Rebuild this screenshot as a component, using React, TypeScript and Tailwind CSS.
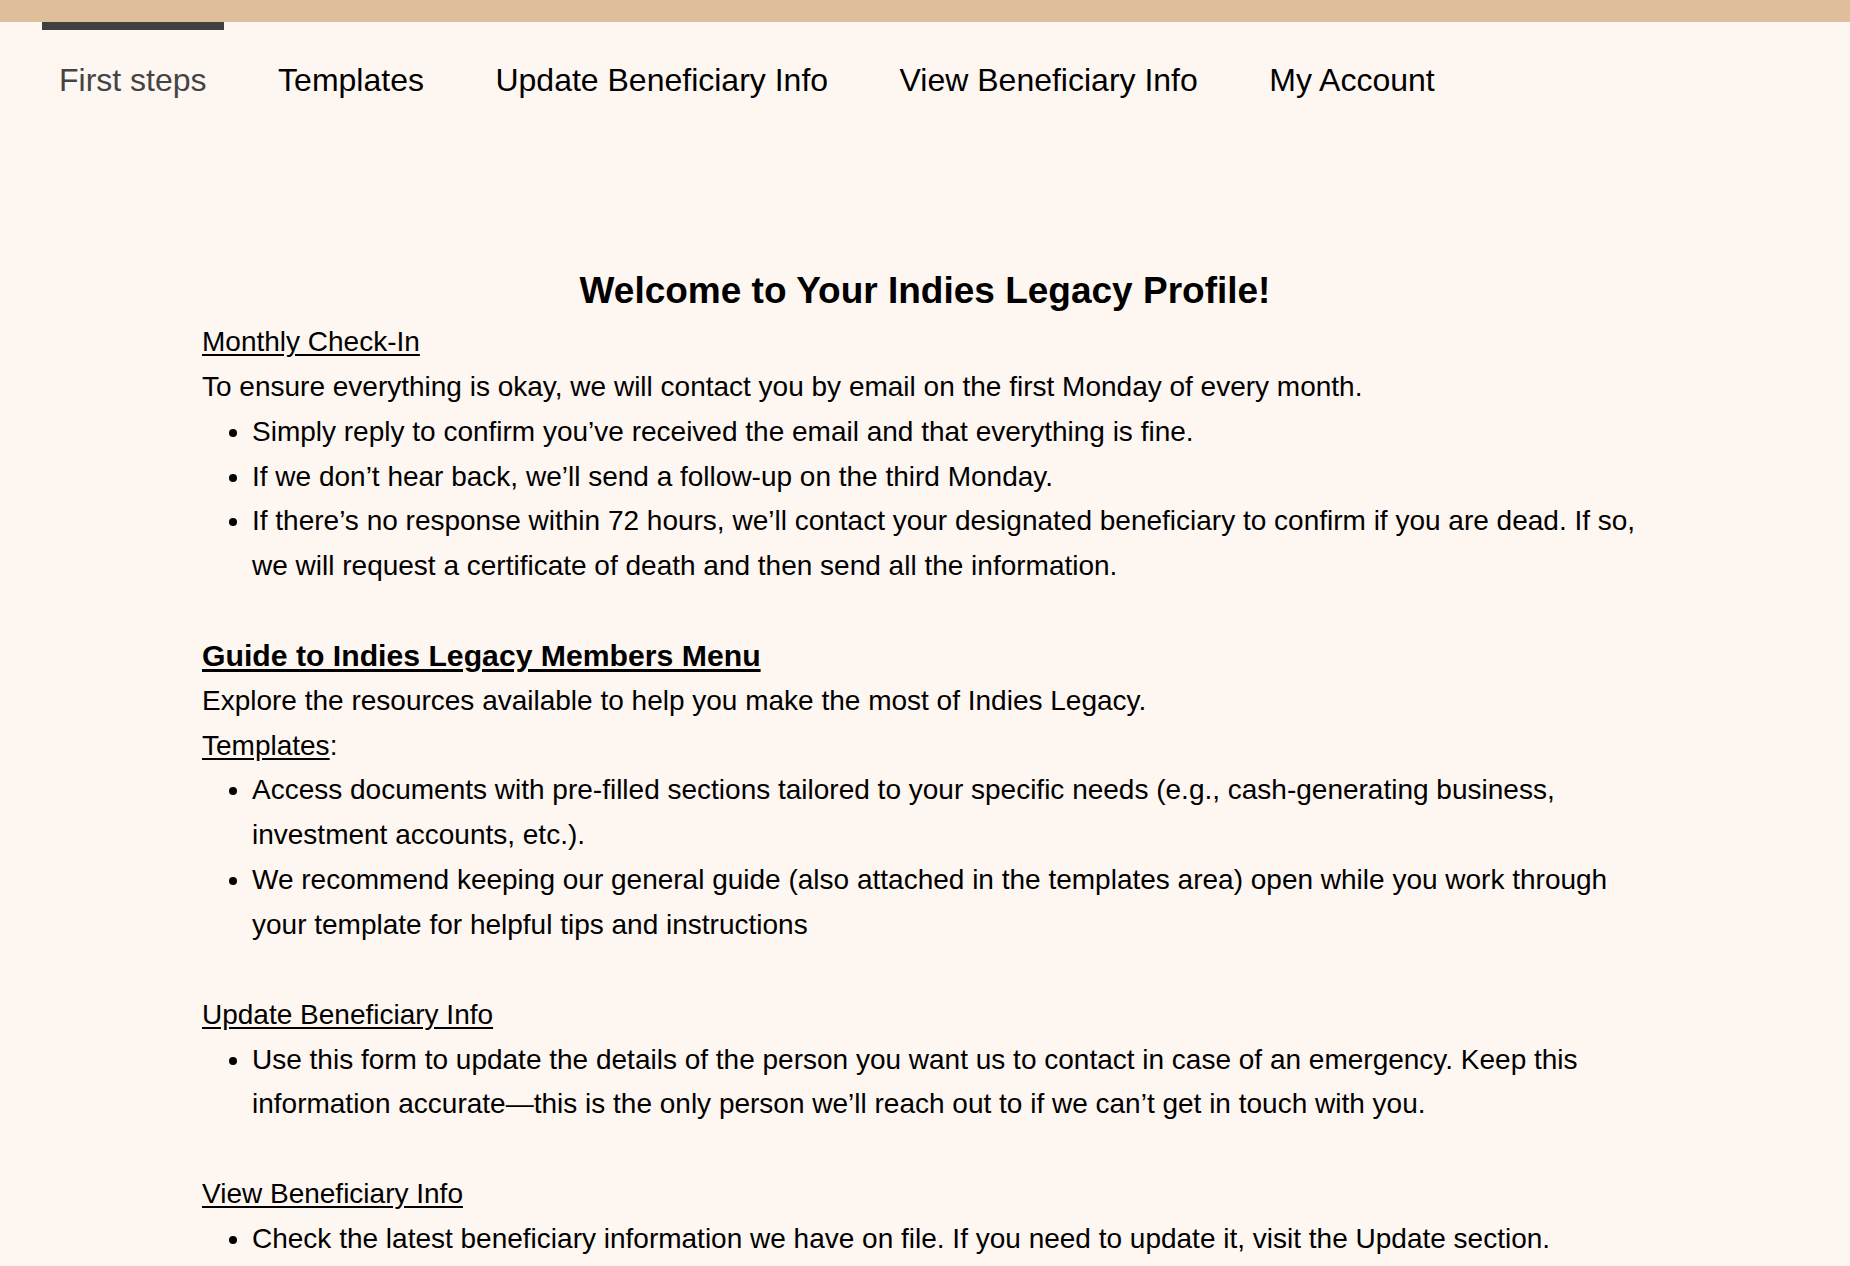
import React from "react";

const tabs = ["First steps", "Templates", "Update Beneficiary Info", "View Beneficiary Info", "My Account"];

export default function App() {
  return (
    <div
      className="min-h-[1266px] w-full bg-[#fef6f1] text-black"
      style={{ fontFamily: '"Liberation Sans", Arial, Helvetica, sans-serif' }}
    >
      <div className="h-[22px] w-full bg-[#dfbe9c]" />
      <nav className="flex pl-[42px] gap-[37.5px]">
        {tabs.map((t, i) => (
          <div
            key={t}
            className={
              i === 0
                ? "border-t-[8px] border-[#404040] px-[17px] pt-[31px] text-[32px] leading-[38px] text-[#444444]"
                : "border-t-[8px] border-transparent px-[17px] pt-[31px] text-[32px] leading-[38px] text-black"
            }
          >
            {t}
          </div>
        ))}
      </nav>

      <main className="px-[202px] pt-[167px] pb-[40px] text-[28px] leading-[44.85px]">
        <h1 className="mb-[4px] text-center text-[37px] font-bold leading-[50px]">
          Welcome to Your Indies Legacy Profile!
        </h1>

        <p className="underline underline-offset-[3px]">Monthly Check-In</p>
        <p>To ensure everything is okay, we will contact you by email on the first Monday of every month.</p>
        <ul className="list-disc pl-[50px]">
          <li>Simply reply to confirm you’ve received the email and that everything is fine.</li>
          <li>If we don’t hear back, we’ll send a follow-up on the third Monday.</li>
          <li>
            If there’s no response within 72 hours, we’ll contact your designated beneficiary to confirm if you are dead. If so,
            we will request a certificate of death and then send all the information.
          </li>
        </ul>

        <h2 className="mt-[44.85px] text-[30.2px] font-bold leading-[44.85px] underline underline-offset-[3px]">
          Guide to Indies Legacy Members Menu
        </h2>
        <p>Explore the resources available to help you make the most of Indies Legacy.</p>
        <p>
          <span className="underline underline-offset-[3px]">Templates</span>:
        </p>
        <ul className="list-disc pl-[50px]">
          <li>
            Access documents with pre-filled sections tailored to your specific needs (e.g., cash-generating business,
            investment accounts, etc.).
          </li>
          <li>
            We recommend keeping our general guide (also attached in the templates area) open while you work through your
            template for helpful tips and instructions
          </li>
        </ul>

        <p className="mt-[44.85px] underline underline-offset-[3px]">Update Beneficiary Info</p>
        <ul className="list-disc pl-[50px]">
          <li>
            Use this form to update the details of the person you want us to contact in case of an emergency. Keep this
            information accurate—this is the only person we’ll reach out to if we can’t get in touch with you.
          </li>
        </ul>

        <p className="mt-[44.85px] underline underline-offset-[3px]">View Beneficiary Info</p>
        <ul className="list-disc pl-[50px]">
          <li>Check the latest beneficiary information we have on file. If you need to update it, visit the Update section.</li>
        </ul>
      </main>
    </div>
  );
}
